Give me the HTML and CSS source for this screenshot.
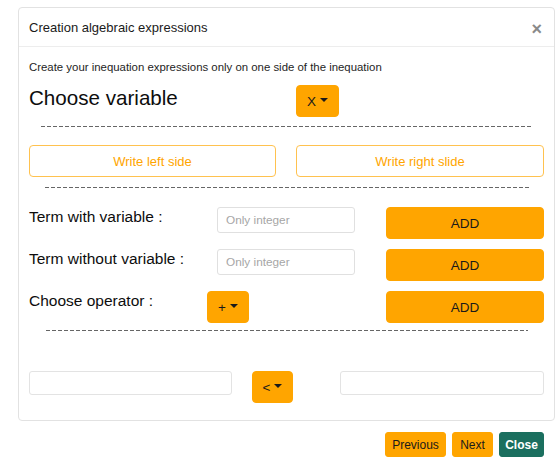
FILE: index.html
```html
<!DOCTYPE html>
<html>
<head>
<meta charset="utf-8">
<link rel="stylesheet" href="styles.css">
</head>
<body>
<div class="page">
  <div class="card">
    <div class="card-header">
      <span class="title">Creation algebraic expressions</span>
      <span class="close-x">&times;</span>
    </div>
    <div class="card-body">
      <div class="subtitle">Create your inequation expressions only on one side of the inequation</div>
      <div class="two-col var-row">
        <div class="big-label">Choose variable</div>
        <div><button class="btn btn-orange dd dd-x">X<span class="caret"></span></button></div>
      </div>
      <div class="dash dash1"></div>
      <div class="two-col write-row">
        <button class="btn btn-outline">Write left side</button>
        <button class="btn btn-outline">Write right slide</button>
      </div>
      <div class="dash dash2"></div>
      <div class="terms">
        <div class="term-row">
          <div class="label">Term with variable :</div>
          <div><input class="int-input" type="text" placeholder="Only integer"></div>
          <button class="btn btn-orange add">ADD</button>
        </div>
        <div class="term-row">
          <div class="label">Term without variable :</div>
          <div><input class="int-input" type="text" placeholder="Only integer"></div>
          <button class="btn btn-orange add">ADD</button>
        </div>
        <div class="term-row">
          <div class="label">Choose operator :</div>
          <div><button class="btn btn-orange dd dd-op">+<span class="caret"></span></button></div>
          <button class="btn btn-orange add">ADD</button>
        </div>
      </div>
      <div class="dash dash3"></div>
      <div class="result-row">
        <input class="side-input" type="text">
        <button class="btn btn-orange dd dd-op">&lt;<span class="caret"></span></button>
        <input class="side-input" type="text">
      </div>
    </div>
  </div>
  <div class="footer">
    <button class="btn btn-orange fbtn prev">Previous</button>
    <button class="btn btn-orange fbtn next">Next</button>
    <button class="btn btn-green fbtn close">Close</button>
  </div>
</div>
</body>
</html>
```

FILE: styles.css
```css
* { box-sizing: border-box; }
html, body { margin: 0; padding: 0; background: #fff; }
body {
  font-family: "Liberation Sans", Arial, sans-serif;
  color: #212121;
}
.page {
  padding: 7px 4px 0 18px;
  width: 559px;
}
.card {
  width: 537px;
  border: 1px solid #e2e2e2;
  border-radius: 4px;
}
.card-header {
  height: 39px;
  border-bottom: 1px solid #ededed;
  padding: 0 10px;
  display: flex;
  align-items: center;
  justify-content: space-between;
}
.title {
  font-size: 13px;
  color: #1a1a1a;
}
.close-x {
  font-size: 18px;
  font-weight: bold;
  color: #8a8a8a;
  margin-right: 2px;
  margin-top: 4px;
  line-height: 1;
}
.card-body {
  padding: 13px 10px 17px 10px;
}
.subtitle {
  font-size: 11.4px;
  line-height: 14px;
  color: #1e1e1e;
}
.two-col {
  display: grid;
  grid-template-columns: 247px 248px;
  column-gap: 20px;
}
.var-row {
  margin-top: 11px;
  align-items: start;
}
.big-label {
  font-size: 20.6px;
  line-height: 26px;
  color: #0d0d0d;
}
.btn {
  font-family: "Liberation Sans", Arial, sans-serif;
  border: 1px solid transparent;
  border-radius: 4px;
  padding: 0;
  margin: 0;
  cursor: pointer;
  display: inline-flex;
  align-items: center;
  justify-content: center;
}
.btn-orange {
  background: #ffa500;
  border-color: #ffa500;
  color: #1a1a1a;
  font-size: 13.5px;
}
.dd {
  height: 32px;
}
.dd-x { width: 43px; }
.dd-op { width: 42px; }
.caret {
  display: inline-block;
  width: 0;
  height: 0;
  margin-left: 4px;
  margin-top: -2px;
  border-top: 4px solid #1a1a1a;
  border-left: 4px solid transparent;
  border-right: 4px solid transparent;
}
.dash {
  height: 1px;
  background: repeating-linear-gradient(to right, #666 0, #666 4px, transparent 4px, transparent 6px);
}
.dash1 { margin: 9px 13px 0 12px; }
.dash2 { margin: 10px 15px 0 16px; }
.dash3 { margin: 7px 16px 0 17px; }
.write-row {
  margin-top: 18px;
}
.btn-outline {
  height: 32px;
  background: #fff;
  border: 1px solid #ffc24f;
  color: #ffa500;
  font-size: 13px;
}
.terms {
  margin-top: 19px;
  display: flex;
  flex-direction: column;
  gap: 10px;
}
.term-row {
  display: grid;
  grid-template-columns: 178px 148px 1fr;
  align-items: start;
}
.label {
  font-size: 15.5px;
  line-height: 19px;
  color: #0d0d0d;
}
.int-input {
  margin-left: 10px;
  width: 138px;
  height: 26px;
  border: 1px solid #e0e0e0;
  border-radius: 3px;
  padding: 0 8px;
  font-family: "Liberation Sans", Arial, sans-serif;
  font-size: 11.8px;
  outline: none;
}
.int-input::placeholder { color: #a6a6a6; }
.add {
  height: 32px;
  width: 158px;
  justify-self: end;
}
.result-row {
  margin-top: 40px;
  display: flex;
  align-items: start;
}
.side-input {
  height: 24px;
  border: 1px solid #e3e3e3;
  border-radius: 3px;
  outline: none;
}
.side-input:first-child { width: 203px; margin-right: 20px; }
.side-input:last-child { width: 204px; margin-left: 47px; }
.footer {
  margin-top: 11px;
  display: flex;
  justify-content: flex-end;
  gap: 6px;
  padding-right: 11px;
}
.fbtn {
  height: 25px;
  font-size: 12px;
  border-radius: 3px;
}
.prev { width: 61px; }
.next { width: 41px; }
.close { width: 45px; }
.btn-green {
  background: #1b6f5f;
  border-color: #1b6f5f;
  color: #fff;
  font-weight: bold;
  font-size: 12px;
}
```
